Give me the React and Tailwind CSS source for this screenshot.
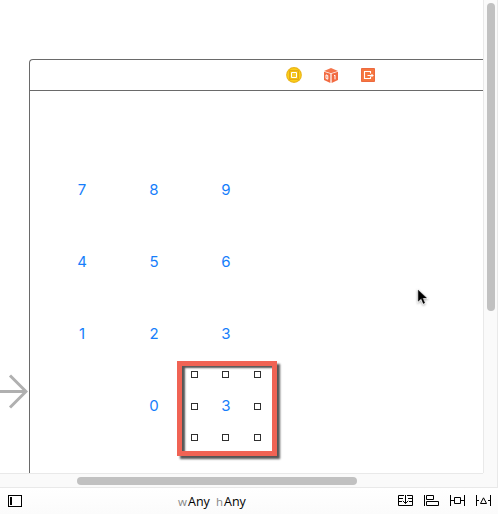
const keys = ['7', '8', '9', '4', '5', '6', '1', '2', '3', '', '0', '3'];

function ControllerIcon() {
  return (
    <svg width="16" height="16" viewBox="0 0 16 16">
      <circle cx="8" cy="8" r="7.9" fill="#eab41a" />
      <circle cx="8" cy="8" r="6.8" fill="#fcce17" />
      <path d="M3.5 3.5h9v9h-9z" fill="#f3be12" stroke="#e3aa18" />
      <path d="M5.5 5.5h5v5h-5z" fill="#f5c92c" stroke="#fff" />
    </svg>
  );
}

function ResponderIcon() {
  return (
    <svg width="14" height="15" viewBox="0 0 14 15">
      <path d="M0 3L7 0l7 3-7 2.3z" fill="#f5754b" />
      <path d="M0 3.7l6.4 2V15L0 12z" fill="#f26b42" />
      <path d="M14 3.7l-6.4 2V15L14 12z" fill="#f26b42" />
      <path d="M2 6.9v3.6l1.8.7V7.5zM10 7.8l1-.6v4.2" fill="none" stroke="#fff" />
    </svg>
  );
}

function ExitIcon() {
  return (
    <svg width="14" height="14" viewBox="0 0 14 14">
      <path d="M.5.5h13v13H.5z" fill="#f6763f" stroke="#ec6a40" />
      <path d="M9.5 5.5v-2h-6v7h6v-2M6.5 7.5h6M11 6v3" fill="none" stroke="#fff" strokeWidth="1.1" />
    </svg>
  );
}

function Handle() {
  return <span className="size-[7px] border border-[#303030] bg-white" />;
}

function Selection() {
  return (
    <div className="absolute top-[361px] left-[177px] h-[95px] w-[100px] border-5 border-[#f06354] shadow-[3px_3px_2px_#555,inset_3px_2px_2px_#555]">
      <div className="grid grid-cols-[31px_32px_7px] grid-rows-[32px_31px_7px] pt-[5px] pl-[9px]">
        <Handle />
        <Handle />
        <Handle />
        <Handle />
        <span />
        <Handle />
        <Handle />
        <Handle />
        <Handle />
      </div>
    </div>
  );
}

function EntryArrow() {
  return (
    <svg className="absolute top-[372px] left-0" width="28" height="39" viewBox="0 0 28 39">
      <path d="M0 19.5h26M10 3.5l16 16-16 16" fill="none" stroke="#b0b0b0" strokeWidth="3" />
    </svg>
  );
}

function Pointer() {
  return (
    <svg className="absolute top-[287px] left-[415px] drop-shadow-[0_1px_1px_#0005]" width="16" height="20" viewBox="0 0 16 20">
      <path d="M2.5 1.5v14.8l3.3-3.1 2 4.6 3-1.3-2-4.4h4.7z" fill="#fff" />
      <path d="M3.3 3.2v11l2.9-2.7 2.1 5 1.4-.6-2.1-5h3.9z" fill="#000" stroke="#000" strokeWidth=".5" />
    </svg>
  );
}

function LayoutIcons() {
  return (
    <div className="flex gap-[11px]">
      <svg width="15" height="12" viewBox="0 0 15 12" fill="none" stroke="#000">
        <path d="M6 .5H.5v10h14V.5H9M1 3.5h4M10 3.5h4M1 6.5h3M11 6.5h3M7.5 0v8.5" />
        <path d="M4.8 5.8l2.7 2.7 2.7-2.7" />
      </svg>
      <svg width="15" height="12" viewBox="0 0 15 12" fill="none" stroke="#000">
        <path d="M.5 0v11M2.5 .5h7v4h-7zM2.5 6.5h12v4h-12z" />
      </svg>
      <svg width="15" height="12" viewBox="0 0 15 12" fill="none" stroke="#000">
        <path d="M.5 0v11M14.5 0v11M0 5.5h4M11 5.5h4M4.5 2.5h6v6h-6z" />
      </svg>
      <svg width="15" height="12" viewBox="0 0 15 12" fill="none" stroke="#000">
        <path d="M.5 0v11M14.5 0v11M0 5.5h3M12 5.5h3M7.5 2.8l3 5.7h-6z" />
      </svg>
    </div>
  );
}

export default function App() {
  return (
    <div className="flex h-[514px] w-[498px] flex-col overflow-hidden bg-white font-['Inter',sans-serif]">
      <div className="flex h-[473px]">
        <main className="relative w-[483px] overflow-hidden pt-[59px] pl-[29px]">
          <section className="h-[414px] rounded-tl-[4px] border-t border-l border-[#6a6a6a]">
            <header className="flex h-[31px] items-center border-b border-[#6a6a6a] pl-[256px]">
              <ControllerIcon />
              <span className="mr-[23px] ml-[22px]">
                <ResponderIcon />
              </span>
              <ExitIcon />
            </header>
            <div className="grid grid-cols-[repeat(3,72px)] grid-rows-[repeat(4,72px)] pt-[63px] pl-4">
              {keys.map((key, i) => (
                <span key={i} className="flex items-center justify-center text-[15px] text-[#167efb]">
                  {key}
                </span>
              ))}
            </div>
          </section>
          <EntryArrow />
          <Selection />
          <Pointer />
        </main>
        <div className="w-[15px] border-x border-[#e9e9e9] bg-[#fafafa] pt-[3px] pl-[3px]">
          <div className="h-[308px] w-2 rounded-full bg-[#c1c1c1]" />
        </div>
      </div>
      <div className="flex h-[15px]">
        <div className="w-[483px] border-y border-[#e9e9e9] bg-[#fafafa] pt-[3px] pl-[77px]">
          <div className="h-2 w-[280px] rounded-full bg-[#c1c1c1]" />
        </div>
        <div className="w-[15px] border-r border-b border-[#e9e9e9] bg-[#fafafa]" />
      </div>
      <footer className="flex h-[26px] items-start bg-linear-to-b from-white to-[#fbfbfb] pt-[7px] pl-2">
        <svg width="14" height="12" viewBox="0 0 14 12" shapeRendering="crispEdges">
          <path d="M.5.5h13v11H.5z" fill="#fff" stroke="#000" />
          <path d="M2 2h2v8H2z" />
        </svg>
        <div className="ml-[156px] flex w-[220px] items-baseline font-['Open_Sans',sans-serif] text-[12.5px] leading-[14px] text-black">
          <span className="w-[10px] text-[11.5px] text-[#888]">w</span>
          <span className="w-[28px]">Any</span>
          <span className="w-[8px] text-[11.5px] text-[#888]">h</span>
          <span>Any</span>
        </div>
        <LayoutIcons />
      </footer>
    </div>
  );
}
